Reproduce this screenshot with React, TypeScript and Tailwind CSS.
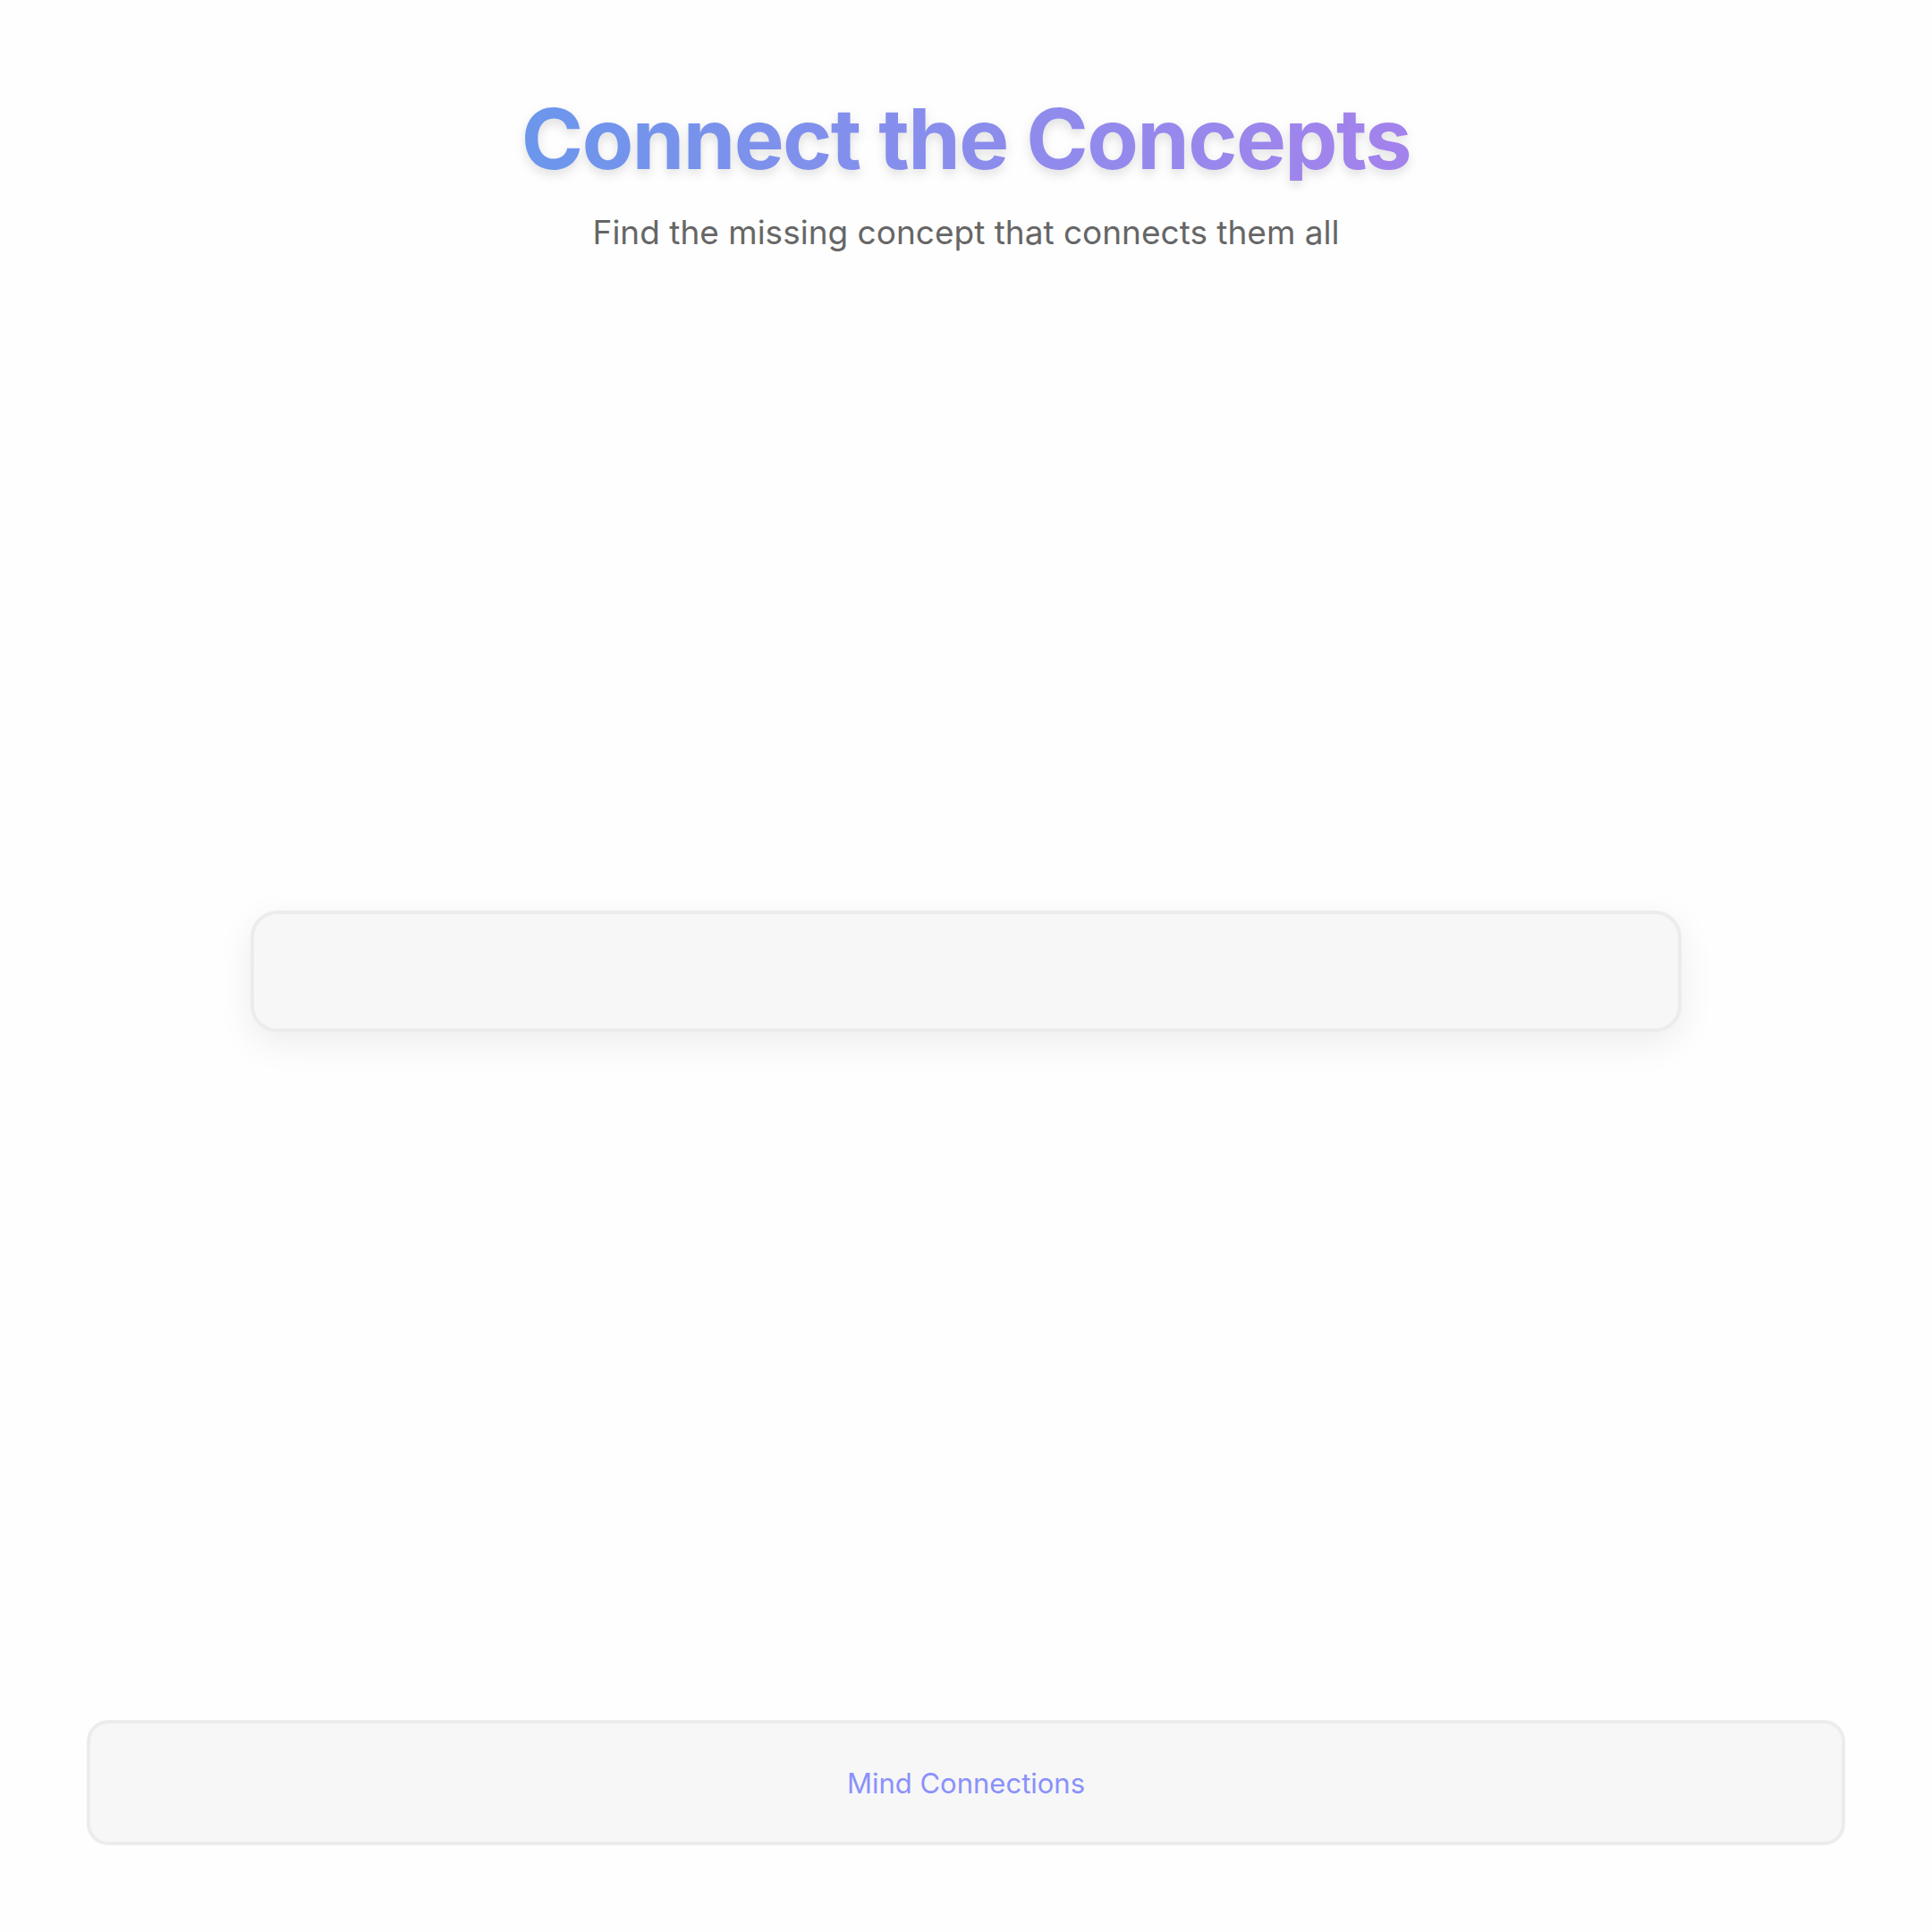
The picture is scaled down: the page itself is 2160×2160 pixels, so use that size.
import React from "react";

export default function App() {
  return (
    <div
      className="min-h-[2160px] w-full flex flex-col bg-[#fefefe]"
      style={{ fontFamily: "Inter, 'Liberation Sans', sans-serif" }}
    >
      <header className="flex flex-col items-center pt-[108px]">
        <h1 className="text-[94px] leading-none font-bold tracking-[-1.6px] bg-gradient-to-r from-[#6b96ec] to-[#a382ec] bg-clip-text text-transparent drop-shadow-[0_5px_6px_rgba(0,0,0,0.12)]">
          Connect the Concepts
        </h1>
        <p className="mt-[39px] text-[37px] leading-none text-[#666666]">
          Find the missing concept that connects them all
        </p>
      </header>

      <main className="flex justify-center">
        <div className="mt-[740px] w-[1600px] h-[136px] rounded-[30px] border-[4px] border-[#ececec] bg-[#f7f7f7] shadow-[0_12px_40px_rgba(0,0,0,0.07)]" />
      </main>

      <footer className="mt-auto mx-[97px] mb-[97px] h-[140px] rounded-[24px] border-[4px] border-[#ececec] bg-[#f7f7f7] flex items-center justify-center">
        <span className="text-[31px] leading-none text-[#8a91fb]">Mind Connections</span>
      </footer>
    </div>
  );
}
